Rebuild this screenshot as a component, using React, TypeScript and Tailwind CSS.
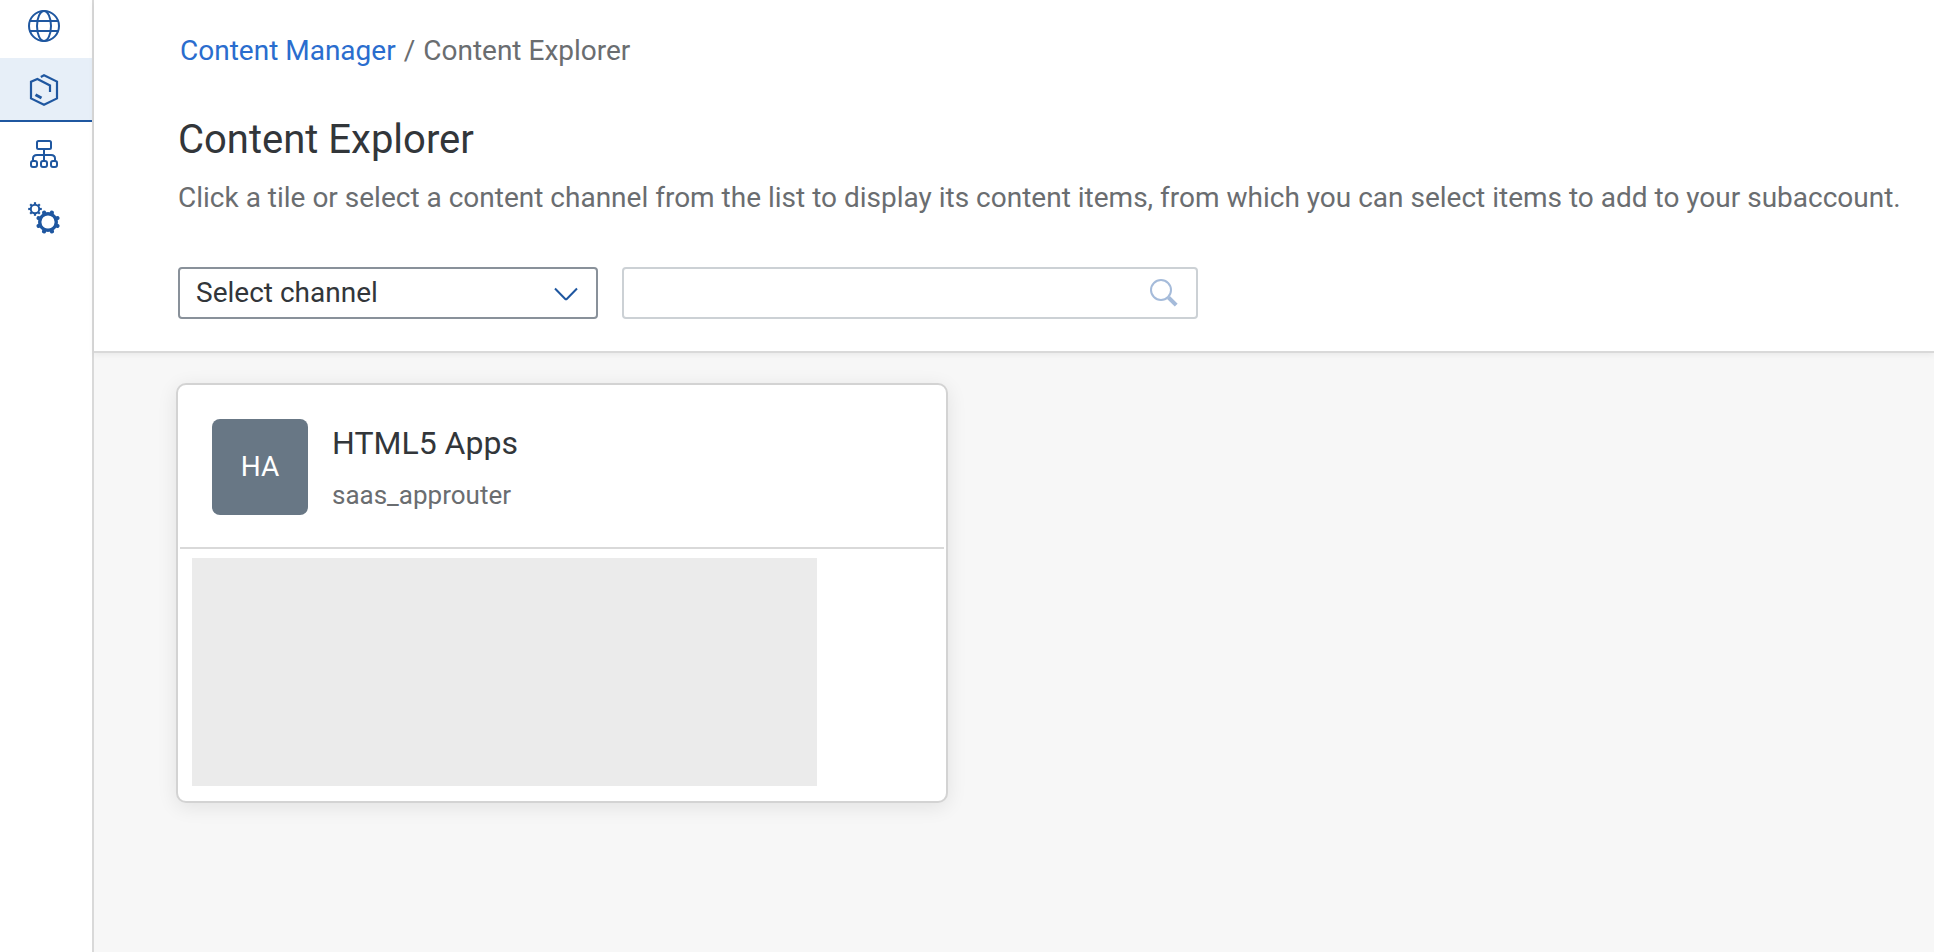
import type { ReactNode } from "react";

function GlobeIcon() {
  return (
    <svg viewBox="0 0 32 32" className="size-8" fill="none" stroke="currentColor" strokeWidth="2" aria-hidden="true">
      <circle cx="16" cy="16" r="15" />
      <ellipse cx="16" cy="16" rx="7" ry="15" />
      <path d="M2 11H30M2 21H30" />
    </svg>
  );
}

function ContentIcon() {
  return (
    <svg viewBox="0 0 32 32" className="size-8" fill="none" stroke="currentColor" strokeWidth="2.2" aria-hidden="true">
      <path d="M12.8 2.9L16 1.3L29 7.6V24.4L16 30.7L3 24.4V7.8L9.4 4.9L22 11.4V18" />
      <path d="M7.5 20.8L13.5 24" strokeWidth="3" />
    </svg>
  );
}

function SiteMapIcon() {
  return (
    <svg viewBox="0 0 32 32" className="size-8" fill="none" stroke="currentColor" strokeWidth="2" aria-hidden="true">
      <rect x="9" y="3" width="14" height="8" rx="1.5" />
      <path d="M16 11V23M5 23V20.5Q5 17 9 17H23Q27 17 27 20.5V23" />
      <rect x="3" y="23" width="6" height="6" rx="2" />
      <rect x="13" y="23" width="6" height="6" rx="2" />
      <rect x="23" y="23" width="6" height="6" rx="2" />
    </svg>
  );
}

function GearsIcon() {
  const spokes = [0, 45, 90, 135, 180, 225, 270, 315];
  return (
    <svg viewBox="0 0 32 32" className="size-8" fill="none" stroke="currentColor" aria-hidden="true">
      <circle cx="7" cy="7" r="4.2" strokeWidth="2" />
      {spokes.map((a) => (
        <path key={a} d="M7 2.8V0.2" strokeWidth="2.2" transform={`rotate(${a} 7 7)`} />
      ))}
      <circle cx="20" cy="20" r="8.3" strokeWidth="3.4" />
      {spokes.map((a) => (
        <path key={a} d="M20 11V9.8" strokeWidth="4.2" strokeLinecap="round" transform={`rotate(${a + 22.5} 20 20)`} />
      ))}
    </svg>
  );
}

function NavItem({ label, active, first, children }: { label: string; active?: boolean; first?: boolean; children: ReactNode }) {
  const shape = first ? "h-[58px] pb-1.5" : active ? "h-16 border-b-2 border-[#1f57a0] bg-[#e7eff8] pt-0.5" : "h-16";
  return (
    <a href="#" aria-label={label} aria-current={active ? "page" : undefined} className={`flex items-center justify-center pr-1 ${shape}`}>
      {children}
    </a>
  );
}

export default function App() {
  return (
    <div className="flex min-h-screen bg-[#f7f7f7] font-[Roboto,sans-serif] text-[28px] leading-8 text-[#6a6d70]">
      <nav aria-label="Main" className="w-[94px] shrink-0 border-r-2 border-[#d9d9d9] bg-white text-[#1f57a0]">
        <NavItem label="Sites" first><GlobeIcon /></NavItem>
        <NavItem label="Content" active><ContentIcon /></NavItem>
        <NavItem label="Channels"><SiteMapIcon /></NavItem>
        <NavItem label="Settings"><GearsIcon /></NavItem>
      </nav>
      <div className="min-w-0 flex-1">
        <header className="border-b-2 border-[#d9d9d9] bg-white pt-[35px] pr-6 pb-8 pl-[84px] shadow-[0_2px_6px_rgba(0,0,0,0.06)]">
          <nav aria-label="Breadcrumb" className="flex gap-2 pl-0.5">
            <a href="#" className="text-[#2a6dce]">Content Manager</a>
            <span>/</span>
            <span>Content Explorer</span>
          </nav>
          <h1 className="mt-[49px] text-[40px] leading-12 text-[#32363a]">Content Explorer</h1>
          <p className="mt-[18px] whitespace-nowrap">
            Click a tile or select a content channel from the list to display its content items, from which you can select items to add to your subaccount.
          </p>
          <div className="mt-[53px] flex gap-6">
            <div className="relative w-[420px]">
              <select aria-label="Select channel" className="h-[52px] w-full appearance-none rounded border-2 border-[#89919a] bg-white pr-14 pl-4 text-[#32363a]">
                <option>Select channel</option>
              </select>
              <svg viewBox="0 0 24 14" className="pointer-events-none absolute top-5 right-5 h-3.5 w-6" fill="none" stroke="#1f57a0" strokeWidth="2" aria-hidden="true">
                <path d="M1 1.5L11 11.8Q12 12.8 13 11.8L23 1.5" />
              </svg>
            </div>
            <div className="relative w-[576px]">
              <input type="search" aria-label="Search" className="h-[52px] w-full rounded border-2 border-[#ccd1d5] bg-white pr-14 pl-4 text-[#32363a]" />
              <button type="button" aria-label="Search" className="absolute top-3 right-5 text-[#a5bbda]">
                <svg viewBox="0 0 28 28" className="size-7" fill="none" stroke="currentColor" aria-hidden="true">
                  <circle cx="11" cy="11" r="10" strokeWidth="2" />
                  <path d="M18.5 18.5L26.2 26.2" strokeWidth="4" />
                </svg>
              </button>
            </div>
          </div>
        </header>
        <main className="py-[30px] pr-6 pl-[82px]">
          <article className="h-[420px] w-[772px] rounded-[10px] border-2 border-[#d3d3d3] bg-white px-0.5 shadow-[0_4px_20px_rgba(0,0,0,0.09)]">
            <div className="flex items-center gap-6 border-b-2 border-[#d9d9d9] px-8 pt-[34px] pb-8">
              <div className="flex size-24 shrink-0 items-center justify-center rounded-lg bg-[#687785] text-white">HA</div>
              <div>
                <h2 className="text-[32px] leading-10 text-[#32363a]">HTML5 Apps</h2>
                <p className="mt-4 text-[26px]">saas_approuter</p>
              </div>
            </div>
            <div className="mt-[9px] ml-3 h-[228px] w-[625px] bg-[#ebebeb]" />
          </article>
        </main>
      </div>
    </div>
  );
}
